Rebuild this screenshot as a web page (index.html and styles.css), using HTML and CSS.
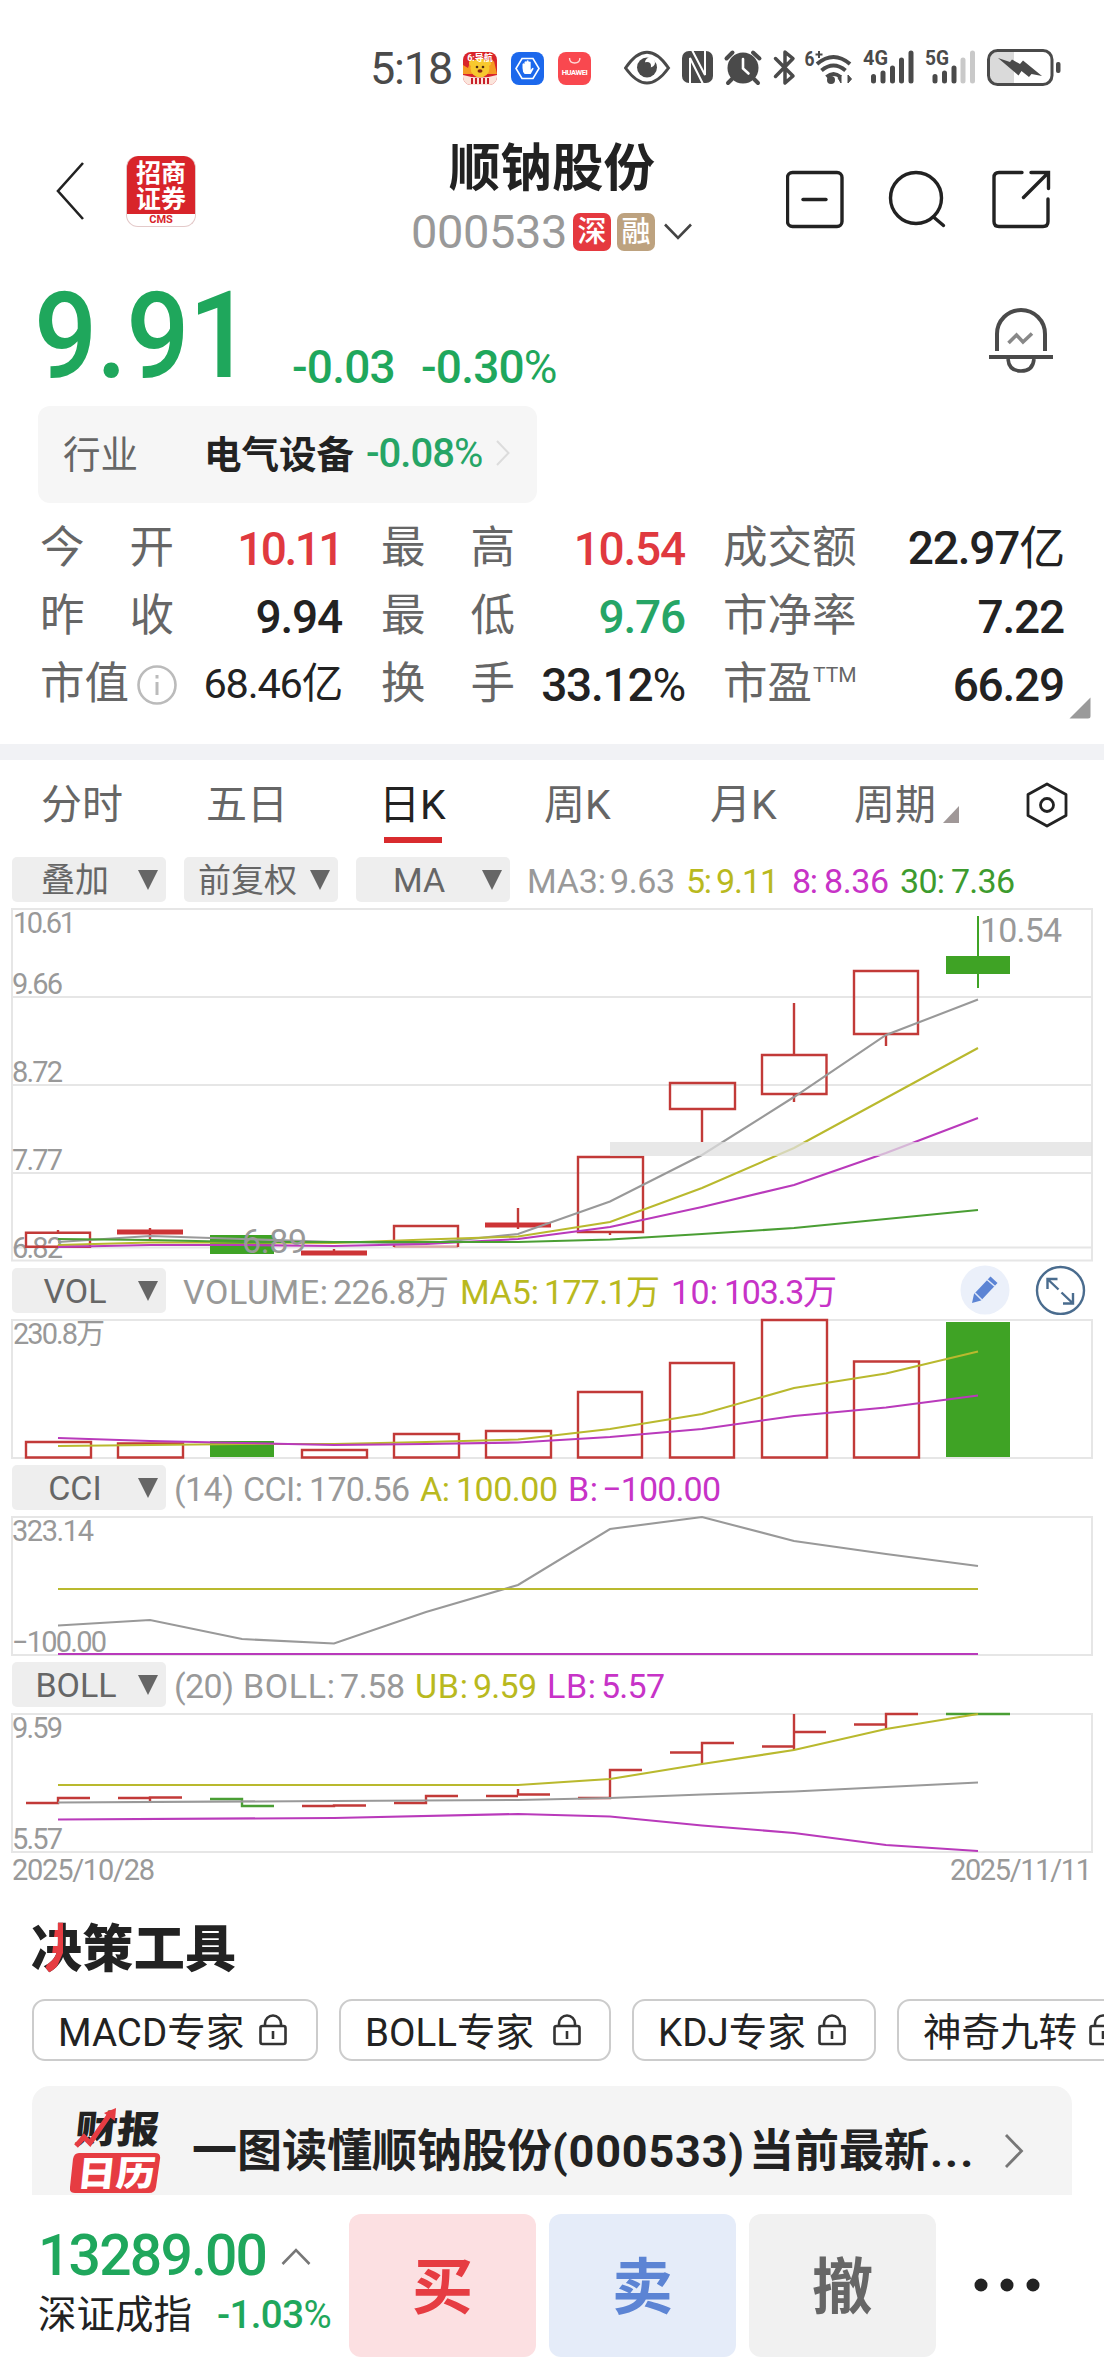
FILE: index.html
```html
<!DOCTYPE html>
<html lang="zh-CN">
<head>
<meta charset="utf-8">
<title>顺钠股份 000533</title>
<link rel="stylesheet" href="styles.css">
</head>
<body>
<svg class="defs" width="0" height="0">
  <symbol id="lock" viewBox="0 0 28 32"><path d="M6 12V9.500a8 8 0 0 1 16 0V12" fill="none" stroke="#333" stroke-width="2.600"/><rect x="1.500" y="12" width="25" height="18" rx="2" fill="none" stroke="#333" stroke-width="2.600"/><path d="M14 17v8" stroke="#333" stroke-width="2.600"/></symbol>
</svg>
<div class="page">
  <div class="status">
    <span class="time">5:18</span>
    <svg class="apps" width="130" height="34" viewBox="462 51 130 34">
      <rect x="463" y="52" width="34" height="33" rx="8" fill="#d9252a"/>
      <path d="M463 74v-9l5 3 3-8 7 5 5-7 4 6 7-3 3 13z" fill="#f59a23"/>
      <circle cx="480" cy="68" r="9.500" fill="#f7c92e"/><circle cx="472" cy="63" r="3" fill="#f7c92e"/><circle cx="488" cy="63" r="3" fill="#f7c92e"/>
      <circle cx="477" cy="67" r="1.300" fill="#4b2a10"/><circle cx="483" cy="67" r="1.300" fill="#4b2a10"/><ellipse cx="480" cy="71" rx="2.500" ry="1.700" fill="#8b2b12"/>
      <path d="M463 75q17 5 34 0v2a8 8 0 0 1-8 8h-18a8 8 0 0 1-8-8z" fill="#fbe5dc"/>
      <path d="M472 78v6M476 78v6M480 78v6M484 78v6M488 78v6" stroke="#c8202a" stroke-width="2"/>
      <text x="480" y="61" font-size="9" text-anchor="middle" fill="#fff" font-weight="700">6:导航</text>
      <rect x="511" y="52" width="33" height="33" rx="8" fill="#1c68ec"/>
      <path d="M522 58.500h11l6 10-6 10h-11l-6-10z" fill="none" stroke="#fff" stroke-width="1.600"/>
      <path d="M522.500 68v-4q1-1.500 2 0v-2q1-1.500 2 0v-1q1.200-1.500 2.200 0v1q1.200-1.200 2 0v8l1.500-2q1.500-1 1.300 1l-2.800 5h-6q-2.200-2-2.200-6z" fill="#fff"/>
      <rect x="558" y="52" width="33" height="33" rx="8" fill="#f9484f"/>
      <path d="M569.500 58q0 5 5.200 5t5.200-5" fill="none" stroke="#ffd9d8" stroke-width="1.400"/>
      <text x="574.700" y="74.500" font-size="7.600" font-weight="700" text-anchor="middle" fill="#fff" textLength="26">HUAWEI</text>
    </svg>
    <svg class="sys" width="438" height="40" viewBox="624 47 438 40" fill="#4a4a4a">
      <path d="M625.500 68Q647 36.500 668.500 68Q647 98 625.500 68z" fill="none" stroke="#4a4a4a" stroke-width="3"/><circle cx="647" cy="67.500" r="10"/><circle cx="650" cy="62.500" r="5" fill="#fff"/><circle cx="647" cy="66" r="4"/>
      <rect x="682" y="51" width="31" height="32" rx="7"/><path d="M690 84V58L703 84M705 50V75L692 50" fill="none" stroke="#fff" stroke-width="2"/>
      <circle cx="743" cy="68" r="15.500"/><path d="M726.500 58.500l6-6M753 52.500l6.500 6M732 79l-4 4M754 79l4 4" stroke="#4a4a4a" stroke-width="4" stroke-linecap="round"/><path d="M743 59v9.500l5.500 5" fill="none" stroke="#fff" stroke-width="2.600" stroke-linecap="round"/>
      <path d="M775.500 58.500L793 76l-8 7V52l8 6.500L775.500 76.500" fill="none" stroke="#4a4a4a" stroke-width="3.500" stroke-linejoin="round" stroke-linecap="round"/>
      <text x="804.500" y="66" font-size="20" font-weight="700" textLength="10" lengthAdjust="spacingAndGlyphs">6</text><path d="M815.500 54.500h7M819 51v7" stroke="#4a4a4a" stroke-width="2"/>
      <path d="M817 64q16.500-14 33 0M821.500 70.500q12-10 24 0M826.500 77q7-6 14 0" fill="none" stroke="#4a4a4a" stroke-width="4"/><circle cx="831" cy="80" r="4"/><path d="M841 83v-8l-3 3zM848 75v8l3.500-4z" stroke="#4a4a4a"/>
      <text x="863" y="65" font-size="21" font-weight="700" textLength="25" lengthAdjust="spacingAndGlyphs">4G</text>
      <path d="M873.500 76.500v4.500M883 73v8M892.500 68v13M901.500 60v21M911 53v28" stroke="#4a4a4a" stroke-width="5" stroke-linecap="round"/>
      <text x="925" y="65" font-size="21" font-weight="700" textLength="24" lengthAdjust="spacingAndGlyphs">5G</text>
      <path d="M935 76.500v4.500M944.500 73v8M954 68v13" stroke="#4a4a4a" stroke-width="5" stroke-linecap="round"/><path d="M963 60v21M972.500 53v28" stroke="#c9c9c9" stroke-width="5" stroke-linecap="round"/>
      <rect x="988" y="50.500" width="64" height="34" rx="9" fill="#fff"/><path d="M997 52h17v31h-17q-7 0-7-8V60q0-8 7-8z" fill="#dadada"/><rect x="988.500" y="50.500" width="63.500" height="34" rx="9" fill="none" stroke="#4a4a4a" stroke-width="3"/><path d="M998 58l12 4 2-2.500 8 4.500 3-3.500L1042 76l-10.500-2-2.500 3-7.500-6-3 4.500z"/><rect x="1056" y="62" width="4.500" height="11" rx="2"/>
    </svg>
  </div>

  <header class="head">
    <svg class="back" width="30" height="60" viewBox="0 0 30 60"><path d="M28 2L3 30l25 28" fill="none" stroke="#222" stroke-width="2.600"/></svg>
    <div class="logo"><span>招商</span><span>证券</span><i>CMS</i></div>
    <div class="name">
      <h1>顺钠股份</h1>
      <div class="code"><span>000533</span><b class="sz">深</b><b class="rz">融</b>
        <svg width="28" height="18" viewBox="0 0 28 18"><path d="M1 1.500L14 15 27 1.500" fill="none" stroke="#444" stroke-width="2.600"/></svg></div>
    </div>
    <svg class="acts" width="266" height="60" viewBox="786 170 266 60" fill="none" stroke="#222" stroke-width="3.400">
      <rect x="787.500" y="172.500" width="54.500" height="54" rx="5"/><path d="M803 199.500h23" stroke-linecap="round"/>
      <ellipse cx="916" cy="198" rx="25.500" ry="25.500"/><path d="M933.500 217l10 8.500" stroke-linecap="round"/>
      <path d="M1022 172.500h-23q-5 0-5 5v44q0 5 5 5h44q5 0 5-5V199M1031 172.500h17.500v16M1048 173l-24.500 24.500" stroke-linecap="round"/>
    </svg>
  </header>

  <section class="quote">
    <span class="price"><span>9.91</span></span><span class="chg">-0.03</span><span class="chg pct">-0.30<u>%</u></span>
    <svg class="bell" width="66" height="66" viewBox="0 0 66 66" fill="none" stroke="#4a4a4a" stroke-width="4"><path d="M9 44V27a24 24 0 0 1 48 0v17"/><path d="M1 50h64"/><path d="M20 52q1 12 13 12t13-12" stroke-width="3.600"/><path d="M20.500 36l8-8 6.500 7 9-8.500" stroke="#888" stroke-width="3.600"/></svg>
  </section>

  <div class="industry"><span class="k">行业</span><b>电气设备</b><em>-0.08<u>%</u></em><svg width="16" height="28" viewBox="0 0 16 28"><path d="M2 2l11.500 12L2 26" fill="none" stroke="#dcdcdc" stroke-width="2"/></svg></div>

  <section class="stats">
    <div class="cell"><span class="lab">今<i></i>开</span><span class="val up tight">10.11</span></div>
    <div class="cell"><span class="lab">最<i></i>高</span><span class="val up">10.54</span></div>
    <div class="cell"><span class="lab">成交额</span><span class="val">22.97<u>亿</u></span></div>
    <div class="cell"><span class="lab">昨<i></i>收</span><span class="val">9.94</span></div>
    <div class="cell"><span class="lab">最<i></i>低</span><span class="val down">9.76</span></div>
    <div class="cell"><span class="lab">市净率</span><span class="val">7.22</span></div>
    <div class="cell"><span class="lab">市值<svg width="40" height="40" viewBox="0 0 40 40"><circle cx="20" cy="20" r="18.500" fill="none" stroke="#bbb" stroke-width="2.600"/><path d="M20 17v13M20 10v3.500" stroke="#bbb" stroke-width="3"/></svg></span><span class="val small">68.46<u>亿</u></span></div>
    <div class="cell"><span class="lab">换<i></i>手</span><span class="val">33.12<u>%</u></span></div>
    <div class="cell"><span class="lab">市盈<sup>TTM</sup></span><span class="val">66.29</span></div>
    <svg class="more" width="24" height="24" viewBox="0 0 24 24"><path d="M1.500 22.500L22.500 1.500V20q0 2.500-2.500 2.500z" fill="#9a9a9a"/></svg>
  </section>
  <div class="sep"></div>

  <nav class="tabs">
    <span>分时</span><span>五日</span><span class="on">日K</span><span>周K</span><span>月K</span>
    <span class="per">周期<svg width="16" height="17" viewBox="0 0 16 17"><path d="M0 17L16 0v17z" fill="#a09898"/></svg></span>
    <svg class="hex" width="42" height="46" viewBox="0 0 42 46" fill="none" stroke="#222" stroke-width="2.800"><path d="M21 2l19 10.500v21L21 44 2 33.500v-21z" stroke-linejoin="round"/><circle cx="21" cy="23" r="6.500"/></svg>
  </nav>

  <div class="bar first">
    <button><span>叠加</span></button><button class="l3"><span>前复权</span></button><button class="ma"><span>MA</span></button>
    <svg class="legend" width="574" height="46" viewBox="518 857 574 46"><text class="g" x="527" y="893" textLength="79">MA3:</text><text class="g" x="610" y="893" textLength="65">9.63</text><text class="y" x="686" y="893" textLength="26">5:</text><text class="y" x="716" y="893" textLength="63">9.11</text><text class="m" x="792" y="893" textLength="26">8:</text><text class="m" x="824" y="893" textLength="65">8.36</text><text class="n" x="900" y="893" textLength="45">30:</text><text class="n" x="951" y="893" textLength="64">7.36</text></svg>
  </div>
  <svg class="chart" width="1104" height="354" viewBox="0 908 1104 354">
    <g class="grid"><path d="M12 909H1092V1260.500H12zM12 997H1092M12 1085H1092M12 1173H1092M12 1247.500H1092"/></g>
    <g class="axis"><text x="13" y="933" textLength="63">10.61</text><text x="12" y="994" textLength="51">9.66</text><text x="12" y="1082" textLength="51">8.72</text><text x="12" y="1170" textLength="51">7.77</text><text x="12" y="1258" textLength="51">6.82</text></g>
    <g class="red"><path d="M26 1232.700H90V1246.700H26zM58 1230v3M150 1228v11M334 1249v3M394 1247V1226H458V1247M518 1208v21M578 1157H643V1232H578zM610 1232v3M670 1083H735V1109H670zM702 1109v33M762 1055H826.500V1094H762zM794 1003v52M794 1094v8M854 971H918V1034H854zM886 1034v12"/><path class="thick" d="M117 1232h66M301 1253h66M485 1225h66"/><path d="M394 1246.500h64" opacity=".4"/></g>
    <g class="green"><rect x="210" y="1235" width="64" height="19"/><rect x="946" y="956" width="64" height="18"/><rect x="977" y="916" width="2" height="72"/></g>
    <g class="line"><path class="lg" d="M58 1242L150 1236 242 1239 334 1242 426 1243.500 518 1234 610 1201.500 702 1155 794 1097 886 1035 978 999.500"/><path class="ly" d="M58 1245L150 1242.500 242 1242.500 334 1243 426 1239.500 518 1236.500 610 1222 702 1188 794 1148 886 1098 978 1048"/><path class="lm" d="M58 1247L150 1245 242 1245 334 1246 426 1244 518 1239 610 1227 702 1207 794 1185 886 1153 978 1118"/><path class="ln" d="M58 1239L150 1240 242 1242 334 1242 426 1242 518 1242 610 1239.500 702 1234 794 1228 886 1219 978 1210"/></g>
    <rect x="610" y="1142" width="482" height="14" fill="#e0e0e0" opacity=".75"/>
    <g class="peak"><text x="980" y="942" textLength="82">10.54</text><text x="242" y="1253" textLength="65">6.89</text></g>
  </svg>

  <div class="bar vol">
    <button><span>VOL</span></button>
    <svg class="legend" width="930" height="50" viewBox="174 1265 930 50"><text class="g" x="183" y="1304" textLength="145">VOLUME:</text><text class="g" x="333" y="1304" textLength="116">226.8万</text><text class="y" x="460" y="1304" textLength="79">MA5:</text><text class="y" x="544" y="1304" textLength="116">177.1万</text><text class="m" x="671" y="1304" textLength="47">10:</text><text class="m" x="724" y="1304" textLength="113">103.3万</text>
      <circle cx="985" cy="1290" r="24.500" fill="#ebf0fa"/><path d="M972 1303l2-9 16.500-17.500 7 6.500-16.500 17.500z" fill="#5c84d4"/><path d="M987 1279.500l8 7M975 1293l7 7" stroke="#dfe8fa" stroke-width="1.500"/>
      <circle cx="1060.500" cy="1290.500" r="23.500" fill="none" stroke="#4a6c8e" stroke-width="2.400"/><path d="M1047.500 1289v-10h10M1048 1279.500l10.500 10M1073 1293v10.500h-10M1072.500 1303l-11-10.500" fill="none" stroke="#4a6c8e" stroke-width="2.400"/></svg>
  </div>
  <svg class="chart" width="1104" height="142" viewBox="0 1318 1104 142">
    <g class="grid"><path d="M12 1320H1092V1458H12z"/></g>
    <g class="axis"><text x="13" y="1344" textLength="92">230.8万</text></g>
    <g class="red"><path d="M26 1442H91V1457.500H26zM118 1443.500H183V1457.500H118zM302 1450H367V1457.500H302zM394 1434H459V1457.500H394zM486 1431H551V1457.500H486zM578 1392H642V1457.500H578zM670 1363H734V1457.500H670zM762 1320H827V1457.500H762zM854 1361.500H919V1457.500H854z"/></g>
    <g class="green"><rect x="210" y="1441" width="64" height="16"/><rect x="946" y="1322" width="64" height="135"/></g>
    <g class="line"><path class="ly" d="M58 1446L150 1445 242 1444 334 1444 426 1442 518 1439.500 610 1429 702 1414 794 1388 886 1373.500 978 1351.500"/><path class="lm" d="M58 1438L150 1441 242 1443 334 1445 426 1444 518 1442.500 610 1437 702 1429 794 1416 886 1407.500 978 1395.500"/></g>
  </svg>

  <div class="bar">
    <button><span>CCI</span></button>
    <svg class="legend" width="930" height="45" viewBox="174 1465 930 45"><text class="g" x="174" y="1501" textLength="60">(14)</text><text class="g" x="243" y="1501" textLength="60">CCI:</text><text class="g" x="309" y="1501" textLength="101">170.56</text><text class="y" x="420" y="1501" textLength="30">A:</text><text class="y" x="456" y="1501" textLength="102">100.00</text><text class="m" x="568" y="1501" textLength="30">B:</text><text class="m" x="602" y="1501" textLength="119">−100.00</text></svg>
  </div>
  <svg class="chart" width="1104" height="142" viewBox="0 1515 1104 142">
    <g class="grid"><path d="M12 1517H1092V1655H12z"/></g>
    <g class="axis"><text x="12" y="1541" textLength="82">323.14</text><text x="12" y="1652" textLength="95">−100.00</text></g>
    <g class="line"><path class="lg" d="M58 1625.500L150 1620 242 1639 334 1643.500 426 1612 518 1585 610 1529 702 1517 794 1541 886 1554 978 1566"/><path class="ly" d="M58 1589H978"/><path class="lm" d="M58 1654H978"/></g>
  </svg>

  <div class="bar">
    <button class="boll"><span>BOLL</span></button>
    <svg class="legend" width="930" height="45" viewBox="174 1662 930 45"><text class="g" x="174" y="1698" textLength="60">(20)</text><text class="g" x="243" y="1698" textLength="92">BOLL:</text><text class="g" x="340" y="1698" textLength="65">7.58</text><text class="y" x="415" y="1698" textLength="53">UB:</text><text class="y" x="473" y="1698" textLength="64">9.59</text><text class="m" x="547" y="1698" textLength="49">LB:</text><text class="m" x="601" y="1698" textLength="64">5.57</text></svg>
  </div>
  <svg class="chart" width="1104" height="178" viewBox="0 1712 1104 178">
    <g class="grid"><path d="M12 1714H1092V1852H12z"/></g>
    <g class="axis"><text x="12" y="1738" textLength="51">9.59</text><text x="12" y="1849" textLength="51">5.57</text><text x="12" y="1880" textLength="143">2025/10/28</text><text x="950" y="1880" textLength="142">2025/11/11</text></g>
    <g class="red"><path d="M26 1803H58V1798H90M118 1798H150M150 1801V1797.500H182M302 1806H334V1805.500H366M394 1803H426V1796H458M486 1796H518M518 1789V1794.500H550M578 1798H610V1770H642M670 1752.500H702M702 1764V1743H734M762 1746.500H794M794 1714V1750M794 1732H826M854 1724.500H886M886 1729V1714H918"/></g>
    <path d="M210 1799H242V1806H274M946 1714h64" fill="none" stroke="#4a9e34" stroke-width="2.400"/>
    <g class="line"><path class="lg" d="M58 1802.500L334 1801 518 1800 610 1798 702 1794.500 794 1791.500 886 1787 978 1782.500"/><path class="ly" d="M58 1785H518L610 1779 702 1764 794 1750 886 1729 978 1714"/><path class="lm" d="M58 1819.500L334 1818 518 1814 610 1816.500 702 1825.500 794 1833 886 1845 978 1851"/></g>
  </svg>

  <h2 class="tools-title"><svg width="220" height="60" viewBox="0 0 220 60"><defs><clipPath id="c"><path d="M25 0h7v33L20 60H8l13-25z"/></clipPath></defs><text x="0" y="47" textLength="205">决策工具</text><text x="0" y="47" textLength="205" clip-path="url(#c)" class="hot">决策工具</text></svg></h2>
  <div class="chips">
    <div class="chip c1"><span>MACD专家</span><svg><use href="#lock"/></svg></div>
    <div class="chip c2"><span>BOLL专家</span><svg><use href="#lock"/></svg></div>
    <div class="chip c3"><span>KDJ专家</span><svg><use href="#lock"/></svg></div>
    <div class="chip c4"><span>神奇九转</span><svg><use href="#lock"/></svg></div>
  </div>

  <div class="news">
    <svg class="cal" width="92" height="88" viewBox="70 2107 92 88"><g transform="translate(0 2143) skewX(-6)"><text x="74" y="0" font-size="38" textLength="84" lengthAdjust="spacingAndGlyphs" fill="#222">财报</text></g><path d="M76 2146l8-9 6 6 20-29" fill="none" stroke="#e63c42" stroke-width="5"/><path d="M104 2113l12-5-1 13z" fill="#e63c42"/><path d="M79 2153h76q6 0 5 6l-4 28q-1 6-7 6H75q-6 0-5-6l3-28q1-6 6-6z" fill="#e63c42"/><g transform="translate(0 2186) skewX(-6)"><text x="76" y="0" font-size="35" textLength="78" lengthAdjust="spacingAndGlyphs" fill="#fff">日历</text></g></svg>
    <span class="headline"><span>一图读懂顺钠股份</span><span class="num">(000533)</span><span>当前最新</span><span class="dots">...</span></span>
    <svg width="20" height="36" viewBox="0 0 20 36"><path d="M2 2l15.500 16L2 34" fill="none" stroke="#777" stroke-width="2.800"/></svg>
  </div>

  <footer class="trade">
    <div class="index"><div class="top"><span>13289.00</span><svg width="30" height="18" viewBox="0 0 30 18"><path d="M1.500 16L15 2l13.500 14" fill="none" stroke="#777" stroke-width="2.600"/></svg></div><div class="bot"><span>深证成指</span><em>-1.03<u>%</u></em></div></div>
    <div class="act buy">买</div><div class="act sell">卖</div><div class="act cancel">撤</div>
    <svg class="ell" width="66" height="14" viewBox="0 0 66 14" fill="#222"><circle cx="7" cy="7" r="6.500"/><circle cx="33" cy="7" r="6.500"/><circle cx="59" cy="7" r="6.500"/></svg>
  </footer>
</div>
</body>
</html>
```
FILE: styles.css
```css
* { box-sizing: border-box; }
body { margin: 0; background: #fff; font-family: Roboto, "Noto Sans CJK SC", sans-serif; color: #222; }
.page { width: 1104px; height: 2376px; overflow: hidden; display: flex; flex-direction: column; }
.page > * { flex-shrink: 0; }
.defs { display: none; }
svg { display: block; flex-shrink: 0; }
svg text { font-family: Roboto, "Noto Sans CJK SC", sans-serif; }
i, em { font-style: normal; }
u { text-decoration: none; font-weight: 400; }

.status { height: 110px; padding: 0 0 0 370px; display: flex; align-items: flex-start; }
.time { width: 92px; margin-top: 42px; font-size: 45px; line-height: 53px; letter-spacing: -1.2px; color: #4a4a4a; }
.apps { margin-top: 51px; }
.sys { margin: 47px 0 0 32px; }

.head { height: 160px; padding-left: 55px; display: flex; align-items: flex-start; }
.back { margin-top: 51px; }
.logo { width: 70px; height: 71px; margin: 46px 0 0 41px; border-radius: 12px; background: linear-gradient(#d8242a 0 58px, #fff 58px); border: 1px solid #e3c9c9; border-top: 0; display: flex; flex-direction: column; align-items: center; overflow: hidden; }
.logo span { font-size: 25px; font-weight: 700; line-height: 27px; height: 26px; color: #fff; }
.logo span:first-child { margin-top: 4px; }
.logo i { margin-top: 1px; font-size: 11px; line-height: 13px; font-weight: 700; color: #d8242a; }
.name { width: 300px; margin-left: 206px; display: flex; flex-direction: column; align-items: center; }
h1 { margin: 24px 0 0; width: 310px; text-align: center; font-size: 51.5px; line-height: 70px; font-weight: 700; }
.code { height: 40px; margin-top: 8px; width: 282px; display: flex; align-items: center; }
.code span { width: 162px; font-size: 47px; line-height: 40px; letter-spacing: -.4px; color: #999; }
.code b { width: 38px; height: 38px; margin-right: 6px; border-radius: 7px; text-align: center; font-size: 29px; line-height: 38px; font-weight: 500; color: #fff; }
.sz { background: #e5393f; }
.rz { background: #bda27f; }
.code svg { margin-left: 3px; }
.acts { margin: 60px 0 0 84px; }

.quote { height: 136px; padding-left: 34px; display: flex; align-items: flex-start; color: #1fa75c; }
.price { width: 258px; margin-top: 2px; font-size: 121px; line-height: 128px; font-weight: 500; letter-spacing: -1px; }
.price span { display: inline-block; transform: scaleX(.92); transform-origin: left; }
.chg { width: 129px; margin-top: 69px; font-size: 46px; line-height: 56px; font-weight: 500; letter-spacing: -.8px; }
.pct { width: 160px; }
.bell { margin: 37px 0 0 407px; }

.industry { width: 499px; height: 97px; margin-left: 38px; padding: 0 0 3px 25px; border-radius: 12px; background: #f6f6f6; display: flex; align-items: center; font-size: 37.5px; }
.industry .k { width: 141px; margin-top: -3px; color: #666; }
.industry b { width: 162px; margin-top: -3px; }
.industry em { width: 129px; font-size: 40px; font-weight: 500; letter-spacing: -1px; color: #26a566; }

.stats { position: relative; height: 241px; padding: 10px 0 0 40px; display: grid; grid-template-columns: 341px 342px 341px; grid-auto-rows: 68px; }
.cell { display: flex; justify-content: space-between; align-items: center; line-height: 66px; }
.cell:nth-child(3n+1) { padding-right: 39px; }
.cell:nth-child(3n+2) { padding-right: 38px; }
.cell:nth-child(3n) { padding-right: 0; }
.lab { display: flex; align-items: center; font-size: 44.5px; height: 66px; margin-top: 2px; color: #666; white-space: nowrap; }
.lab i { width: 45px; }
.lab svg { margin-left: 8px; margin-top: 1px; }
.lab sup { font-size: 21px; align-self: flex-start; line-height: 48px; margin-left: 1px; }
.val { font-size: 46px; font-weight: 500; letter-spacing: -1.2px; height: 66px; color: #222; white-space: nowrap; margin-top: 4px; }
.val:has(u) { margin-top: 1px; }
.val.small { font-size: 41.5px; font-weight: 400; }
.val.tight { letter-spacing: -2.5px; }
.cell:nth-child(8) .val { margin-top: 4px; }
.up { color: #e0393f; }
.down { color: #26a566; }
.more { position: absolute; right: 12px; top: 193px; }
.sep { height: 16px; background: #f1f2f5; }

.tabs { height: 97px; padding-left: 41px; display: flex; align-items: flex-start; font-size: 41px; line-height: 62px; color: #666; }
.tabs span { margin-top: 14px; width: 169px; height: 69px; white-space: nowrap; }
.tabs span:nth-child(1) { width: 165px; }
.tabs span:nth-child(2) { width: 178px; }
.tabs .on { width: 58px; margin-right: 102px; text-indent: -5px; color: #222; border-bottom: 6px solid #d92b2e; }
.tabs span:nth-child(4) { width: 166px; }
.tabs span:nth-child(5) { width: 144px; }
.tabs .per { display: flex; width: 172px; }
.per svg { margin: 32px 0 0 7px; }
.hex { margin-top: 22px; }

.bar { height: 45px; padding-left: 12px; display: flex; align-items: flex-start; }
.first { height: 51px; }
.vol { height: 50px; margin-top: 3px; }
button { position: relative; width: 154px; height: 45px; margin: 0 18px 0 0; padding: 2px 28px 0 0; border: 0; border-radius: 5px; background: #eee; color: #666; font: 34px/43px Roboto, "Noto Sans CJK SC", sans-serif; text-align: center; white-space: nowrap; }
button::after { content: ""; position: absolute; left: 126px; top: 13px; border: 10px solid transparent; border-top: 20px solid #666; border-bottom: 0; }
.bar button:last-of-type { margin-right: 8px; }
.vol button { margin-top: 3px; }
.l3 { font-size: 33px; padding-right: 27px; }
.boll { padding-right: 26px; }
.legend { font-size: 34px; }
.g { fill: #999; } .y { fill: #b9b91e; } .m { fill: #c733c7; } .n { fill: #3d9b2e; }
.bar + .chart { margin-top: 5px; }
.first + .chart { margin-top: 0; }
.vol + .chart { margin-top: 3px; }
.chart + .bar:not(.vol) { margin-top: 5px; }
.grid path { fill: none; stroke: #e6e6e6; stroke-width: 2; }
.axis text { font-size: 29px; fill: #999; }
.peak text { font-size: 34px; fill: #999; }
.red path { fill: none; stroke: #c23a38; stroke-width: 2.400; }
.red .thick { stroke: #cd3436; stroke-width: 5; }
.green rect { fill: #3fa325; }
.line path { fill: none; stroke-width: 2.100; }
.lg { stroke: #999; } .ly { stroke: #b9b92e; } .lm { stroke: #b93abb; } .ln { stroke: #4a9e34; }

.tools-title { margin: 30px 0 0 31px; height: 60px; }
.tools-title text { font-size: 51px; font-weight: 900; fill: #222; }
.tools-title .hot { fill: #e63c42; }
.chips { margin-top: 19px; padding-left: 32px; display: flex; gap: 21px; }
.chip { height: 62px; padding-left: 24px; border: 2px solid #ccc; border-radius: 13px; display: flex; align-items: center; justify-content: flex-start; font-size: 38.5px; white-space: nowrap; flex-shrink: 0; }
.chip span { margin-top: -3px; }
.chip svg { width: 28px; height: 32px; }
.c1 { width: 286px; } .c1 span { width: 201px; }
.c2 { width: 272px; } .c2 span { width: 188px; }
.c3 { width: 244px; } .c3 span { width: 160px; }
.c4 { width: 286px; } .c4 span { width: 166px; }

.news { width: 1040px; height: 109px; margin: 25px 0 0 32px; padding-left: 38px; background: #f4f4f4; border-radius: 18px 18px 0 0; display: flex; align-items: flex-start; }
.cal { margin-top: 21px; }
.cal text { font-weight: 900; }
.headline { width: 812px; margin: 34px 0 0 30px; display: flex; font-size: 45px; line-height: 64px; font-weight: 700; white-space: nowrap; }
.headline .num { width: 197px; letter-spacing: .8px; }
.dots { letter-spacing: 2px; margin-left: 1px; }
.news > svg:last-child { margin-top: 47px; }

.trade { height: 181px; padding: 19px 0 0 38px; display: flex; align-items: flex-start; }
.index { width: 311px; color: #1fa75c; }
.top { display: flex; height: 70px; }
.top span { width: 243px; margin-top: 8px; font-size: 57px; line-height: 68px; letter-spacing: -1.8px; font-weight: 500; }
.top svg { margin-top: 34px; }
.bot { display: flex; margin-top: 3px; line-height: 56px; font-size: 38.5px; }
.bot span { width: 179px; color: #222; }
.bot em { font-size: 38.5px; font-weight: 500; letter-spacing: -.6px; }
.act { width: 187px; height: 143px; margin-right: 13px; border-radius: 12px; text-align: center; font-size: 61px; line-height: 148px; font-weight: 700; }
.buy { background: #fce0e2; color: #e63c42; }
.sell { background: #e5ecf9; color: #5c84d4; }
.cancel { background: #f1f1f1; color: #666; }
.ell { margin: 64px 0 0 25px; }
```
